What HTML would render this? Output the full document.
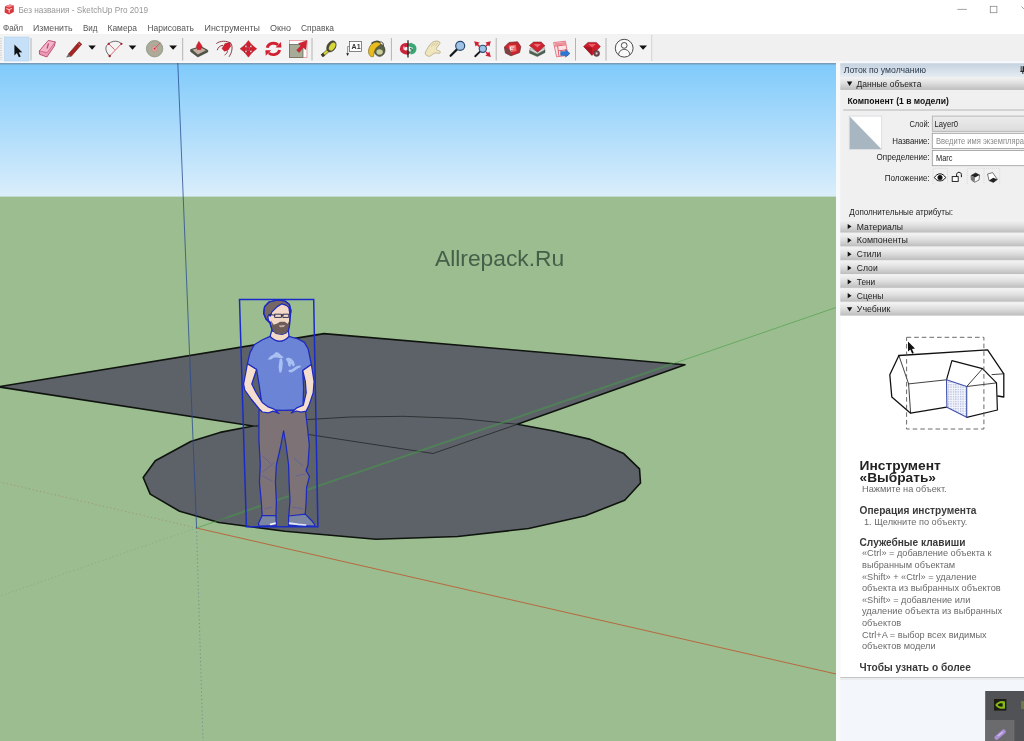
<!DOCTYPE html>
<html><head><meta charset="utf-8">
<style>
*{margin:0;padding:0;box-sizing:border-box}
html,body{width:1024px;height:741px;overflow:hidden;background:#fff}
body{position:relative;filter:blur(0.4px);font-family:"Liberation Sans",sans-serif;color:#333}
.t{position:absolute;white-space:nowrap;line-height:1;transform-origin:0 50%}
#titlebar{position:absolute;left:0;top:0;width:1024px;height:34px;background:#fff}
#toolbar{position:absolute;left:0;top:34px;width:1024px;height:29px;background:#f0f0f0}
#vp{position:absolute;left:0;top:63px;width:836px;height:678px;display:block}
#panel{position:absolute;left:836px;top:63px;width:188px;height:678px;background:#f0f0f0}
.row{position:absolute;left:5px;width:183px;height:12.3px;background:linear-gradient(#efefef,#dcdcdc 45%,#c2c2c2);}
.row .t{left:16px;top:1.5px;font-size:8.7px;color:#222}
.row i{position:absolute;left:6px;top:3.5px;width:0;height:0;border-style:solid}
.row i.r{border-width:2.6px 0 2.6px 4.2px;border-color:transparent transparent transparent #111}
.row i.d{border-width:4.2px 2.6px 0 2.6px;border-color:#111 transparent transparent transparent;left:5.5px;top:4px}
.lbl{position:absolute;font-size:8.1px;color:#222;white-space:nowrap;line-height:1;text-align:right;right:94px}
.inp{position:absolute;left:96px;width:96px;height:15.5px;border:1px solid #adadad;background:#fff;font-size:8px;line-height:13px;padding-left:2.5px;white-space:nowrap;overflow:hidden}
.tx{position:absolute;left:26px;font-size:9.2px;color:#666;white-space:nowrap;line-height:1}
.hd{position:absolute;left:23.5px;font-size:10.1px;font-weight:bold;color:#333;white-space:nowrap;line-height:1}
</style></head><body>
<!-- TITLEBAR -->
<div id="titlebar"></div>
<!-- TOOLBAR -->
<div id="toolbar"></div>
<svg id="topsvg" style="position:absolute;left:0;top:0" width="1024" height="63" viewBox="0 0 1024 63" font-family="Liberation Sans, sans-serif">
<!-- logo -->
<path d="M5,6.2 L10,4.4 L13.8,5.6 L13.8,12 L9,14.4 L4.6,12.6 Z" fill="#d9363c"/>
<path d="M5,6.2 L10,4.4 L13.8,5.6 L9.2,7.6 Z" fill="#f08a86"/>
<path d="M6.3,8.6 L9.2,9.6 L11.8,8.4 M9.2,9.6 L9.2,12.6" stroke="#fbe0dc" stroke-width="1" fill="none"/>
<text x="18.4" y="13.3" font-size="9.2" fill="#969696" textLength="129.7" lengthAdjust="spacingAndGlyphs">Без названия - SketchUp Pro 2019</text>
<!-- window buttons -->
<path d="M957.4,9.4 h9.4" stroke="#8a8a8a" stroke-width="0.8"/>
<rect x="990.3" y="6.3" width="6.6" height="6.4" fill="none" stroke="#8a8a8a" stroke-width="0.8"/>
<path d="M1021.5,6.5 l5,5" stroke="#8a8a8a" stroke-width="0.8"/>
<!-- menu -->
<g font-size="8.9" fill="#555">
<text x="3" y="30.8" textLength="20" lengthAdjust="spacingAndGlyphs">Файл</text>
<text x="33" y="30.8" textLength="39.5" lengthAdjust="spacingAndGlyphs">Изменить</text>
<text x="83" y="30.8" textLength="14.5" lengthAdjust="spacingAndGlyphs">Вид</text>
<text x="107.5" y="30.8" textLength="29.5" lengthAdjust="spacingAndGlyphs">Камера</text>
<text x="147.5" y="30.8" textLength="46.5" lengthAdjust="spacingAndGlyphs">Нарисовать</text>
<text x="204.5" y="30.8" textLength="55.5" lengthAdjust="spacingAndGlyphs">Инструменты</text>
<text x="270" y="30.8" textLength="21" lengthAdjust="spacingAndGlyphs">Окно</text>
<text x="301" y="30.8" textLength="33" lengthAdjust="spacingAndGlyphs">Справка</text>
</g>
<!-- toolbar bg -->
<rect x="0" y="34.4" width="1024" height="28.6" fill="#f0f0f0"/>
<rect x="0" y="34.4" width="652" height="27.6" fill="#f3f3f3"/>
<path d="M651.7,35 v26.5" stroke="#d2d2d2" stroke-width="1"/>
<rect x="0" y="61" width="1024" height="2.2" fill="#f6f8fb"/>
<rect x="0" y="63" width="836" height="0.4" fill="#7b97ab"/>
<!-- gripper -->
<path d="M1,38 v22" stroke="#c8c8c8" stroke-width="1.4" stroke-dasharray="1 1.4"/>
<!-- select -->
<rect x="4.5" y="37" width="24.5" height="24" fill="#c6e0f7" stroke="#b3d3ee" stroke-width="0.6"/>
<path d="M14.4,44.4 L14.4,55.4 L16.9,53 L18.9,57.3 L20.7,56.5 L18.8,52.4 L22.2,52.2 Z" fill="#111"/>
<!-- separators -->
<g stroke="#b4b4b4" stroke-width="1">
<path d="M31,38 v22.5"/><path d="M182.7,38 v22.5"/><path d="M312,38 v22.5"/><path d="M391.4,38 v22.5"/><path d="M496.2,38 v22.5"/><path d="M575.5,38 v22.5"/><path d="M606,38 v22.5"/>
</g>
<!-- eraser -->
<path d="M39.3,51 L48.2,40.6 L55.3,41.9 L54.4,46 L46.9,57 L39.6,54.3 Z" fill="#ef98b3" stroke="#a33c66" stroke-width="0.8" stroke-linejoin="round"/>
<path d="M39.3,51 L48.2,40.6 L55.3,41.9 L47.2,52.6 Z" fill="#f7b5c9" stroke="#a33c66" stroke-width="0.5" stroke-linejoin="round"/>
<path d="M48.5,43.5 L47,48.5" stroke="#b04a74" stroke-width="1.2"/>
<!-- pencil -->
<path d="M68.2,54.2 L79,41.8 L81.8,44.2 L71,56.6 Z" fill="#a82424" stroke="#6e1a1a" stroke-width="0.6"/>
<path d="M68.2,54.2 L71,56.6 L66,57.6 Z" fill="#6a6a6a"/>
<path d="M78.2,43.4 L80.2,45.1" stroke="#e07a7a" stroke-width="0.8"/>
<!-- dropdowns -->
<g fill="#111">
<path d="M88.4,45.4 h7.4 l-3.7,4.3 Z"/><path d="M128.7,45.4 h7.6 l-3.8,4.3 Z"/><path d="M169.2,45.4 h7.8 l-3.9,4.3 Z"/><path d="M639.2,45.5 h7.8 l-3.9,4.3 Z"/>
</g>
<!-- arc -->
<path d="M109.7,56 C104.5,51 105,45.5 108.7,43.8 C112.5,40.2 118.5,40.5 121.4,43.8" fill="none" stroke="#5a5a5a" stroke-width="0.9"/>
<path d="M109.7,56 L121.4,43.8 M108.7,43.8 L114.8,49.8" stroke="#d45a66" stroke-width="0.9" fill="none"/>
<g fill="#9a2030"><circle cx="109.7" cy="56" r="1.2"/><circle cx="108.7" cy="43.8" r="1.1"/><circle cx="121.4" cy="43.8" r="1.1"/></g>
<!-- circle tool -->
<circle cx="154.6" cy="48.7" r="8.2" fill="#a7ab98" stroke="#8d9180" stroke-width="0.8"/>
<circle cx="154.6" cy="48.7" r="5.3" fill="none" stroke="#c7a59c" stroke-width="0.9"/>
<circle cx="154.6" cy="48.7" r="2.8" fill="#d9a8a0" stroke="#c98a86" stroke-width="0.6"/>
<path d="M154.6,48.7 L160.5,42.6" stroke="#d0505c" stroke-width="0.9"/>
<circle cx="154.6" cy="48.7" r="0.9" fill="#d02a3a"/>
<!-- push/pull -->
<path d="M190.6,49.6 L200.6,46.3 L207.8,50.2 L207.8,52 L197.8,57 L190.6,51.6 Z" fill="#4e5646" stroke="#2c302a" stroke-width="0.5"/>
<path d="M192.4,49.8 L200.4,47.2 L206,50.2 L197.9,54.4 Z" fill="#c4ac9e"/>
<path d="M198.4,48 h1.6 v3.4 h-1.6 Z" fill="#eab0b0"/>
<path d="M198.9,41.3 L202.2,46.2 L200.6,49.8 L197.6,49.8 L196.2,46.2 Z" fill="#d42030" stroke="#9a1826" stroke-width="0.4"/>
<!-- follow me -->
<path d="M216.3,43.6 C220,40.6 227,40.4 231,43.4 C233,47 232,52.6 229,56.8 M217.3,50.2 C217.8,47.6 220,45.6 223,45.3 M224.6,55 C226.2,54.2 227.4,52.6 227.5,51.2" fill="none" stroke="#8a3a44" stroke-width="1"/>
<path d="M222,48.6 L225,43.6 L230,42.4 L230.6,46.2 L228,50.2 L224.4,51.2 Z" fill="#d42030" stroke="#8a1420" stroke-width="0.4"/>
<!-- move -->
<g fill="#d22030" stroke="#8a1420" stroke-width="0.3">
<path d="M248.4,40.4 L252.4,45.4 L250,45.4 L250,47.4 L246.8,47.4 L246.8,45.4 L244.4,45.4 Z"/>
<path d="M248.4,57.2 L252.4,52.2 L250,52.2 L250,50.2 L246.8,50.2 L246.8,52.2 L244.4,52.2 Z"/>
<path d="M240,48.8 L245,44.8 L245,47.2 L246.8,47.2 L246.8,50.4 L245,50.4 L245,52.8 Z"/>
<path d="M256.8,48.8 L251.8,44.8 L251.8,47.2 L250,47.2 L250,50.4 L251.8,50.4 L251.8,52.8 Z"/>
</g>
<rect x="247" y="47.4" width="2.8" height="2.8" fill="#d22030"/>
<!-- rotate -->
<g fill="none" stroke="#d22030" stroke-width="2.9">
<path d="M267.2,47.8 C268.2,43.2 274.5,41.8 278,44.8"/>
<path d="M279.6,50 C278.6,54.6 272.3,56 268.8,53"/>
</g>
<path d="M275.6,47.6 L281.4,47.6 L281,42 Z" fill="#d22030"/>
<path d="M271.2,50.2 L265.4,50.2 L265.8,55.8 Z" fill="#d22030"/>
<!-- scale -->
<rect x="289.6" y="40.6" width="17.4" height="16.8" fill="#fdfdfd" stroke="#e46a74" stroke-width="0.6"/>
<rect x="289.6" y="44.4" width="13.4" height="13" fill="#a7ab98" stroke="#5e6254" stroke-width="0.7"/>
<path d="M296.6,50.2 L300.8,45.8 L298.4,43.4 L307,40.6 L305.8,49.8 L303.4,47.6 L299.2,52.6 Z" fill="#d42030" stroke="#8a1420" stroke-width="0.3"/>
<!-- tape -->
<path d="M322,54 L328.6,48.4 L330.4,50.4 L323.6,56.4 Z" fill="#d8d43c" stroke="#4a4a28" stroke-width="0.6"/>
<rect x="321.4" y="53.4" width="3" height="3.2" transform="rotate(-40 322.9 55)" fill="#3a3a2a"/>
<ellipse cx="331.4" cy="46.4" rx="4.2" ry="6" transform="rotate(32 331.4 46.4)" fill="#4a4a36" stroke="#2c2c20" stroke-width="0.5"/>
<ellipse cx="332.2" cy="46.6" rx="2.7" ry="4.4" transform="rotate(32 332.2 46.6)" fill="#d6d83a"/>
<!-- text tool -->
<rect x="349.6" y="41.5" width="12" height="10" fill="#fff" stroke="#555" stroke-width="0.7"/>
<text x="351.6" y="49.4" font-size="7" font-weight="bold" fill="#333">A1</text>
<path d="M349.6,46.5 H347.6 V54" fill="none" stroke="#666" stroke-width="0.7"/>
<path d="M346.2,53.2 h2.8 l-1.4,2.8 Z" fill="#222"/>
<!-- paint bucket -->
<ellipse cx="379.6" cy="50.2" rx="5.4" ry="6.2" fill="#5a6046" stroke="#2f3326" stroke-width="0.6"/>
<ellipse cx="379.6" cy="52" rx="3.2" ry="2.8" fill="#c9cf9c"/>
<path d="M379,44 C379.5,40.5 384,41.5 383.4,46" fill="none" stroke="#4c4c4c" stroke-width="1"/>
<path d="M368.6,50 C369.5,45 373.5,41 378.5,41.5 C381,42 381.2,44.5 378.6,46 C375,48 373.8,52 373.6,56.4 C371,57.8 368,55 368.6,50 Z" fill="#e8bc1e" stroke="#6c5a10" stroke-width="0.6"/>
<path d="M371.5,43.6 C374,41 378,40.8 380,42.6" fill="none" stroke="#4a5038" stroke-width="1.6"/>
<!-- orbit -->
<path d="M408.6,45.2 C403.4,44.4 401.6,46.6 401.8,49.2 C402.2,52 405.4,52.8 408,52.4" fill="none" stroke="#c8243a" stroke-width="4"/>
<path d="M406.6,49.8 L411,52.6 L407,55.4 Z" fill="#c8243a"/>
<path d="M404.2,46.4 C403.4,47.4 403.6,48.6 404.6,49.2" fill="none" stroke="#f0c0c4" stroke-width="1.1"/>
<path d="M409.6,45 C413.4,44.8 414.8,47 414.6,49 C414.4,51.2 412.6,52.4 410.4,52.6" fill="none" stroke="#3aa874" stroke-width="3.8"/>
<path d="M411.4,42.4 L407.6,45 L411.4,47.8 Z" fill="#3aa874"/>
<path d="M410,48.6 C411.4,48.6 412.4,49.4 412.2,50.6" fill="none" stroke="#1f6a46" stroke-width="1.2"/>
<path d="M408,40.2 V57.4" stroke="#1c2a24" stroke-width="1.3"/>
<!-- pan -->
<path d="M425.2,53 C426.5,49.5 429,45.5 431.5,43 C433,41.6 435.5,40.8 438,41.2 C439.6,41.6 440.4,42.6 439.8,43.8 C439,45.4 437.2,46.6 436.4,48.2 C436,49.2 436.6,50 437.8,50.4 C439.4,50.8 440.6,51.4 440.4,52.6 C440,53.6 438,53.4 436.4,53 C434.6,52.8 433.4,53.6 432,54.8 C430.6,56 429.6,56.6 428.4,56.2 C426.6,55.6 425,54.6 425.2,53 Z" fill="#f0e6be" stroke="#aa9e7a" stroke-width="0.7"/>
<path d="M433.2,43.4 L431,46.8 M435.6,42.4 L433.4,46.2 M437.8,42.6 L435.8,46" stroke="#b8ac88" stroke-width="0.5" fill="none"/>
<!-- zoom -->
<path d="M457,49.4 L450.6,55.8" stroke="#15191d" stroke-width="2.2" stroke-linecap="round"/>
<circle cx="460.2" cy="45.8" r="4.5" fill="#9fc3e6" stroke="#2a4a6c" stroke-width="1.2"/>
<!-- zoom extents -->
<g fill="#cc2234">
<path d="M474.2,41.2 L479.6,42.4 L475.6,46.6 Z"/><path d="M490.8,41.2 L485.4,42.4 L489.4,46.6 Z"/><path d="M490.8,57 L485.4,55.8 L489.4,51.6 Z"/>
<path d="M476.4,43.6 L479.4,46.4 M488.6,43.6 L486,46 M488.6,54.6 L486,52.2" stroke="#cc2234" stroke-width="1.6"/>
</g>
<path d="M480,51.6 L475.2,56.2" stroke="#15191d" stroke-width="1.9" stroke-linecap="round"/>
<circle cx="482.8" cy="48.8" r="3.6" fill="#9fc3e6" stroke="#2a4a6c" stroke-width="1.1"/>
<!-- 3d warehouse -->
<path d="M504.4,47 L509,42.4 L517.6,41.8 L520.8,46.6 L519.6,52.6 L511,55.8 L505.4,53 Z" fill="#c8242e" stroke="#6a2a2c" stroke-width="0.7"/>
<path d="M508.6,45.6 L515.8,44.8 L516.6,51 L509.6,52.4 Z" fill="#ee6a6a"/>
<path d="M510.4,47 h4 M510.4,49.2 h2.8 M510.4,47 v4" stroke="#fff" stroke-width="0.9" fill="none"/>
<path d="M504.4,47 L505.4,53 L511,55.8 L510.4,50 Z" fill="#7a4444"/>
<!-- ext warehouse -->
<path d="M529.6,50.2 L537.4,53.6 L545,49.6 L545,52.6 L537.4,56.6 L529.6,53.2 Z" fill="#49624e" stroke="#2c3a30" stroke-width="0.4"/>
<path d="M530,48 L537.2,51.6 L544.6,47.6 L544.6,50 L537.2,54 L530,50.4 Z" fill="#d8d8d8" stroke="#777" stroke-width="0.4"/>
<path d="M529.4,45.6 L533.6,42 L541.2,42 L545,45.8 L537.6,52.2 Z" fill="#cc2430" stroke="#7a1a22" stroke-width="0.5"/>
<path d="M533.6,44 L541,44 L537.4,47.4 Z" fill="#ee6a70"/>
<!-- layout -->
<path d="M553.6,42.6 L565.4,41.2 L568,55.4 L556.6,56.8 Z" fill="#fbe4e6" stroke="#e0606e" stroke-width="0.8"/>
<path d="M554.4,46.2 L566,44.8 M557.6,46 L559,56.4 M558.4,50.8 L567,49.8" stroke="#e0606e" stroke-width="1" fill="none"/>
<path d="M554.6,43.2 L565,42 L565.4,44.6 L555,45.8 Z" fill="#ee8e98"/>
<path d="M560.6,51.4 L565.6,51.4 L565.6,49.6 L570,53.4 L565.6,57.2 L565.6,55.4 L560.6,55.4 Z" fill="#2c78d4" stroke="#1a4a8c" stroke-width="0.4"/>
<!-- ruby -->
<path d="M583.6,46.4 L588,42.4 L596.4,42.4 L600.4,46.6 L592,55.4 Z" fill="#cc1e2c" stroke="#7a1420" stroke-width="0.5"/>
<path d="M588,44 L596,44 L592.2,47.6 Z" fill="#ee5a66"/>
<path d="M583.6,46.4 L592,55.4 L592.2,47.6 Z" fill="#a81824"/>
<circle cx="596.6" cy="53.4" r="3" fill="#6a4a50" stroke="#4a3036" stroke-width="0.5"/>
<circle cx="596.6" cy="53.4" r="1.1" fill="#e8c8cc"/>
<!-- user -->
<circle cx="624.2" cy="48.2" r="8.9" fill="#fafafa" stroke="#3a3a3a" stroke-width="0.9"/>
<circle cx="624.2" cy="45.4" r="2.9" fill="none" stroke="#3a3a3a" stroke-width="0.9"/>
<path d="M618.6,54.8 C619,50.6 622,49.4 624.2,49.4 C626.4,49.4 629.4,50.6 629.8,54.8" fill="none" stroke="#3a3a3a" stroke-width="0.9"/>
</svg>
<!-- VIEWPORT -->
<svg id="vp" viewBox="0 63 836 678">
<defs>
<linearGradient id="sky" x1="0" y1="0" x2="0" y2="1">
<stop offset="0" stop-color="#7fcafb"/><stop offset="1" stop-color="#dbeefb"/>
</linearGradient>
</defs>
<rect x="0" y="63" width="836" height="134" fill="url(#sky)"/>
<rect x="0" y="196.6" width="836" height="545" fill="#9bbd8f"/>
<rect x="0" y="63" width="836" height="1.5" fill="#7a9cb6"/>
<!--SCENE-->
<!-- shapes -->
<g stroke="#10140f" stroke-width="1.6" stroke-linejoin="round" fill="#5d6268">
<path d="M-2,386.8 L324,333.6 L685,364.7 L517.4,424.3 L554,431 L589.3,439.1 L623.7,453.6 L639.5,468.8 L640.5,483 L624.7,500.2 L585.3,515.8 L528.6,528.5 L457.8,536.5 L375.8,539.2 L285,531.3 L219,522.5 L179.6,511.3 L150.2,494.1 L143.2,477.5 L155.3,460.7 L190.7,441.5 L220,432.4 L253,426 Z"/>
</g>
<g stroke="#1a1d20" stroke-width="0.7" fill="none">
<path d="M253,426 L433,453.5 L517.4,424.3"/>
<path d="M253,426 L300,420 L350,417 L404,416.3 L460,418.5 L517.4,424.3"/>
</g>
<!-- axes -->
<line x1="226" y1="517.8" x2="672" y2="364" stroke="#4f9a58" stroke-width="2.4" opacity=".3"/>
<line x1="196.5" y1="528" x2="836" y2="307.5" stroke="#3f9a3f" stroke-width="0.9" opacity=".62"/>
<line x1="196.5" y1="528" x2="836" y2="674" stroke="#bc5a30" stroke-width="1" opacity=".85"/>
<line x1="196.5" y1="528" x2="0" y2="482" stroke="#a86a48" stroke-width="0.9" stroke-dasharray="1.2 2.6" opacity=".5"/>
<line x1="196.5" y1="528" x2="0" y2="596" stroke="#6a9a66" stroke-width="0.9" stroke-dasharray="1.2 2.6" opacity=".45"/>
<line x1="177.8" y1="63" x2="196.6" y2="528" stroke="#27488f" stroke-width="0.9" opacity=".85"/>
<line x1="196.5" y1="528" x2="203" y2="741" stroke="#50609a" stroke-width="0.9" stroke-dasharray="1.2 2.6" opacity=".55"/>
<!-- person -->
<g id="person" stroke="#1c2abf" stroke-width="1.25" stroke-linejoin="round" stroke-linecap="round">
<!-- pants -->
<path d="M259,410 L305.4,410 L307.5,428 L309.3,445 L308,465 L306.1,470.7 L309.4,476.3 L306.6,487.7 L306.1,502.8 L305.2,514.1 L305,518 L288.6,518 L290,501 L289.1,483 L288.6,465 L286,445 L283.6,430.9 L280.5,447 L276.4,465 L275.4,482 L276.4,501 L275.9,517 L262.2,517 L261.2,500.9 L259.4,482 L260.3,465 L258.9,440 Z" fill="#7d7376"/>
<path d="M263,456 L271,464 M262.5,472 L274,463 M263,476 L272,481 M294,458 L303,466 M296,476 L305,474 M265,509 L272,507 M293,507 L303,509" stroke="#4550c0" stroke-width="0.6" fill="none" opacity=".8"/>
<!-- shoes -->
<path d="M262.2,515.5 L275.9,515.5 L276.4,525.6 L259,526 L258.4,523.4 Z" fill="#7d86a0"/>
<path d="M288.6,516 L305.2,514.1 L311.8,520.7 L314.6,524.5 L314.6,526 L288.6,525.4 Z" fill="#7d86a0"/>
<path d="M270.6,524.4 L275,523.2" stroke="#f4f6ff" stroke-width="1.7"/>
<path d="M289.6,523.2 L298,524.4 L305.6,525" stroke="#dfe6ff" stroke-width="1.7" fill="none"/>
<!-- shirt -->
<path d="M270.1,336.4 Q279.8,346 289,336.4 L298,339 L304.4,342.4 L308.2,349 L311.4,364.6 L302.7,370.4 L303.6,388 L303.1,402.4 L303.4,409.6 L283,410.4 L261.2,409.6 L261.4,400.6 L259,384 L256.6,369.5 L247.4,363.8 L250,352.6 L254.3,344.8 L262,340 Z" fill="#6c84d6"/>
<!-- lakes -->
<path d="M267.6,359.4 L270.4,356.2 L273.6,354.6 L276,352 L278.6,352.8 L281.4,355.4 L283.8,357.2 L281,358.6 L277.6,357.4 L274,357.6 L271,359.6 Z M279.6,359.2 L282,358.6 L282.8,363 L282.2,369 L281.2,372.6 L279.4,372.4 L278.6,367 Z M285.6,359 L288,357.6 L291,358.4 L293.6,361 L295,365 L293,366.4 L291,363.6 L290.4,367 L288.4,366 L287.6,362 Z M288.6,370 L291.6,369.4 L294.6,367.6 L297,366 L300.6,365.6 L300.8,367 L297.6,368.4 L295,370.6 L291.6,372.4 L288.8,372 Z" fill="#a9c0f3" stroke="none"/>
<!-- arms -->
<path d="M247.4,363.8 L243.6,384 L244.8,390 L251.5,399.5 L258.8,408.5 L262.3,412 L268.5,412.9 L273,411.2 L279,413.5 L273.5,408.8 L267.6,406.6 L262.3,402.4 L256,392.5 L251.8,384 L256.6,369.5 Z" fill="#f6dece"/>
<path d="M311.4,364.6 L314.1,381.3 L313.2,392.7 L308.8,405.9 L306.2,411.1 L300.9,412.2 L296.6,411 L291.3,413 L296.8,407.8 L303.3,405.2 L306.2,392.7 L305.3,381.3 L302.7,370.4 Z" fill="#f6dece"/>
<!-- neck -->
<path d="M271.6,331 L270.1,336.4 Q279.8,346 289,336.4 L288.4,331 Z" fill="#f3d9c6"/>
<!-- head skin -->
<path d="M267.2,315.5 L267.6,320.5 L270.2,322 L272,329.5 L276,333.4 L282,334.4 L286.6,332.6 L289.4,326 L290,315.2 L289.6,308 L286,303.6 L280,302.4 L273,305.6 Z" fill="#f3d9c6"/>
<!-- hair -->
<path d="M269.6,322.6 L266,319 L263.6,313.2 L264.6,306.6 L269,302 L277.3,300 L285,301 L289.4,304.6 L290.9,310.5 L290.2,315.6 L288.9,307.6 L286.4,305.4 L282,303.8 L277.6,306.4 L271.9,311.9 L270.4,316 L269.6,315.2 L267.8,316.2 L268.4,320.4 Z" fill="#756864"/>
<!-- beard -->
<path d="M271,320.4 L273.6,324.8 L277.2,323.4 L280,321.8 L284.8,321.8 L287.6,323.8 L289.5,320.4 L289.4,326 L286.8,332.6 L282,334.6 L275.8,333.4 L272,329.4 Z" fill="#6c5d5b" stroke="none"/>
<path d="M278.6,325.4 L285.2,325 L283.8,327 L280,327.2 Z" fill="#c9a89a" stroke="none"/>
<!-- head outline -->
<path d="M271.6,331.4 L272,329.5 L269.6,322.6 L266,319 L263.6,313.2 L264.6,306.6 L269,302 L277.3,300 L285,301 L289.4,304.6 L290.9,310.5 L290.2,318 L289.4,326 L288.4,331.4" fill="none"/>
<!-- glasses -->
<path d="M268.8,314.4 L275,315.2 M275,314.2 h6.4 v3.2 h-6.4 Z M283.2,314.2 h5.6 v3.2 h-5.6 Z M281.4,315.2 h1.8" stroke="#23234e" stroke-width="0.9" fill="none"/>
</g>
<!-- bbox -->
<path d="M239.5,299.5 L313.7,299.5 L317.9,526.8 L246.4,526.8 Z" fill="none" stroke="#1a2cc8" stroke-width="1.5"/>
<!-- watermark -->
<text x="435" y="266" font-family="Liberation Sans, sans-serif" font-size="22.8" fill="#456049">Allrepack.Ru</text>
<!--/SCENE-->
</svg>
<!-- PANEL -->
<div id="panel"></div>
<svg id="panelsvg" style="position:absolute;left:836px;top:63px" width="188" height="678" viewBox="836 63 188 678" font-family="Liberation Sans, sans-serif">
<defs>
<linearGradient id="hdr" x1="0" y1="0" x2="0" y2="1"><stop offset="0" stop-color="#c4d2e0"/><stop offset="1" stop-color="#e6ecf2"/></linearGradient>
<linearGradient id="rowg" x1="0" y1="0" x2="0" y2="1"><stop offset="0" stop-color="#f2f2f2"/><stop offset=".45" stop-color="#dedede"/><stop offset="1" stop-color="#bdbdbd"/></linearGradient>
<linearGradient id="ddg" x1="0" y1="0" x2="0" y2="1"><stop offset="0" stop-color="#ececec"/><stop offset="1" stop-color="#dddddd"/></linearGradient>
<pattern id="dots" width="2.4" height="2.4" patternUnits="userSpaceOnUse"><rect width="2.4" height="2.4" fill="#f4f6fc"/><circle cx="0.7" cy="0.7" r="0.45" fill="#5a6ab8"/></pattern>
</defs>
<rect x="836" y="63" width="188" height="678" fill="#f0f0f0"/>
<rect x="836" y="63" width="4.3" height="678" fill="#f7f9fa"/>
<rect x="840.3" y="63.3" width="184" height="13.8" fill="url(#hdr)"/>
<text x="843.7" y="73.3" font-size="8.8" fill="#2a3a4c" textLength="82.3" lengthAdjust="spacingAndGlyphs">Лоток по умолчанию</text>
<path d="M1021.2,66.2 v5.2 h3 M1020.2,71.4 h4 M1022.8,71.4 v2.6" stroke="#222" stroke-width="0.9" fill="none"/><rect x="1022.6" y="66.2" width="1.6" height="5" fill="#222"/>
<rect x="840.3" y="77.7" width="184" height="12.2" fill="url(#rowg)"/>
<path d="M846.9,81.6 h5.4 l-2.7,4.3 Z" fill="#111"/>
<text x="856.6" y="86.7" font-size="8.8" fill="#222" textLength="64.8" lengthAdjust="spacingAndGlyphs">Данные объекта</text>
<text x="847.4" y="103.7" font-size="8.8" font-weight="bold" fill="#111" textLength="101.5" lengthAdjust="spacingAndGlyphs">Компонент (1 в модели)</text>
<path d="M843.3,110 H1024" stroke="#a6a6a6" stroke-width="0.8"/>
<!-- thumb -->
<rect x="849.3" y="116.1" width="32.4" height="33.4" fill="#fff" stroke="#d4d8dc" stroke-width="0.8"/>
<path d="M849.7,116.5 L849.7,149.1 L881.3,149.1 Z" fill="#a8b6c2"/>
<!-- fields -->
<g font-size="8.2" fill="#222">
<text x="909.4" y="126.6" textLength="20.3" lengthAdjust="spacingAndGlyphs">Слой:</text>
<text x="892.2" y="143.5" textLength="37.5" lengthAdjust="spacingAndGlyphs">Название:</text>
<text x="876.6" y="160.3" textLength="53.1" lengthAdjust="spacingAndGlyphs">Определение:</text>
<text x="884.7" y="180.8" textLength="45" lengthAdjust="spacingAndGlyphs">Положение:</text>
</g>
<rect x="932.3" y="116.1" width="95" height="15.2" fill="url(#ddg)" stroke="#acacac" stroke-width="0.8"/>
<text x="934.6" y="126.7" font-size="8.2" fill="#222" textLength="23.4" lengthAdjust="spacingAndGlyphs">Layer0</text>
<rect x="932.3" y="133.3" width="95" height="15.2" fill="#fff" stroke="#9a9a9a" stroke-width="0.8"/>
<text x="936" y="143.5" font-size="8.2" fill="#8a8a8a" textLength="88" lengthAdjust="spacingAndGlyphs">Введите имя экземпляра</text>
<rect x="932.3" y="150.5" width="95" height="15.2" fill="#fff" stroke="#9a9a9a" stroke-width="0.8"/>
<text x="936" y="160.6" font-size="8.2" fill="#222" textLength="16.5" lengthAdjust="spacingAndGlyphs">Marc</text>
<!-- toggles -->
<g fill="none" stroke="#d0d0d0" stroke-width="0.7" stroke-dasharray="1 1">
<path d="M933,184 V168.3 H947.5 V184"/><path d="M967.3,184 V168.3 H984 V184"/><path d="M984,168.3 H999.7 V184"/>
</g>
<path d="M934.4,177.6 C937,172.6 943,172.6 945.6,177.6 C943,182 937,182 934.4,177.6 Z" fill="#fff" stroke="#111" stroke-width="1"/>
<circle cx="940" cy="177.4" r="2.5" fill="#111"/>
<rect x="952.2" y="176.6" width="6" height="4.8" fill="#fff" stroke="#111" stroke-width="0.9"/>
<path d="M956.6,176.6 v-2 c0,-3 4.8,-3 4.8,0 v2.6" fill="none" stroke="#111" stroke-width="1"/>
<path d="M971,175.6 L975.6,173 L979.6,175 L979,180 L974.6,182.2 L971.4,180 Z" fill="#fff" stroke="#222" stroke-width="0.6"/>
<path d="M971,175.6 L975.6,173 L979.6,175 L975,177.4 Z" fill="#222"/>
<path d="M971,175.6 L975,177.4 L974.6,182.2 L971.4,180 Z" fill="#777"/>
<path d="M987.6,174 L992.6,172.6 L997.4,179.4 L993.4,182.4 L989,180.6 Z" fill="#fff" stroke="#222" stroke-width="0.6"/>
<path d="M989,180.6 L993.4,182.4 L997.4,179.4 L993.2,177.8 Z" fill="#222"/>
<text x="849.3" y="215.4" font-size="8.2" fill="#222" textLength="103.8" lengthAdjust="spacingAndGlyphs">Дополнительные атрибуты:</text>

<rect x="840.3" y="220.30" width="184" height="12.2" fill="url(#rowg)"/>
<path d="M847.7,223.90 v5.2 l3.8,-2.6 Z" fill="#111"/>
<text x="856.8" y="229.50" font-size="8.8" fill="#222" textLength="46.2" lengthAdjust="spacingAndGlyphs">Материалы</text>
<rect x="840.3" y="234.13" width="184" height="12.2" fill="url(#rowg)"/>
<path d="M847.7,237.73 v5.2 l3.8,-2.6 Z" fill="#111"/>
<text x="856.8" y="243.33" font-size="8.8" fill="#222" textLength="51.2" lengthAdjust="spacingAndGlyphs">Компоненты</text>
<rect x="840.3" y="247.96" width="184" height="12.2" fill="url(#rowg)"/>
<path d="M847.7,251.56 v5.2 l3.8,-2.6 Z" fill="#111"/>
<text x="856.8" y="257.16" font-size="8.8" fill="#222" textLength="24.5" lengthAdjust="spacingAndGlyphs">Стили</text>
<rect x="840.3" y="261.79" width="184" height="12.2" fill="url(#rowg)"/>
<path d="M847.7,265.39 v5.2 l3.8,-2.6 Z" fill="#111"/>
<text x="856.8" y="270.99" font-size="8.8" fill="#222" textLength="20.9" lengthAdjust="spacingAndGlyphs">Слои</text>
<rect x="840.3" y="275.62" width="184" height="12.2" fill="url(#rowg)"/>
<path d="M847.7,279.22 v5.2 l3.8,-2.6 Z" fill="#111"/>
<text x="856.8" y="284.82" font-size="8.8" fill="#222" textLength="18.4" lengthAdjust="spacingAndGlyphs">Тени</text>
<rect x="840.3" y="289.45" width="184" height="12.2" fill="url(#rowg)"/>
<path d="M847.7,293.05 v5.2 l3.8,-2.6 Z" fill="#111"/>
<text x="856.8" y="298.65" font-size="8.8" fill="#222" textLength="26.5" lengthAdjust="spacingAndGlyphs">Сцены</text>
<rect x="840.3" y="303.28" width="184" height="12.2" fill="url(#rowg)"/>
<path d="M846.9,307.28 h5.4 l-2.7,4.3 Z" fill="#111"/>
<text x="856.8" y="312.48" font-size="8.8" fill="#222" textLength="33.6" lengthAdjust="spacingAndGlyphs">Учебник</text>
<!-- tutor -->
<rect x="840.3" y="316" width="184" height="661" fill="#fff"/>
<rect x="840.3" y="677.4" width="184" height="64" fill="#f3f6fa"/>
<path d="M840.3,677.6 H1024" stroke="#b8b8b8" stroke-width="0.9"/>
<path d="M840.3,679.2 H1024" stroke="#e2e2e2" stroke-width="0.8"/>
<!-- house -->
<g fill="none" stroke="#111" stroke-width="1.1" stroke-linejoin="round" stroke-linecap="round">
<path d="M898.9,355.5 L987.6,349.9 L1003.8,373.8 L1003.8,397 L997.7,396" stroke-width="1.3"/>
<path d="M898.9,355.5 L889.8,374.8 L891.8,397 L910.6,413.2 L946.7,407.2" stroke-width="1.3"/>
<path d="M898.9,355.5 L908.6,383.9 L910.6,413.2" stroke-width="0.8"/>
<path d="M908.6,383.9 L946.5,379.8" stroke-width="0.8"/>
<path d="M992,374.6 L1003.8,373.8" stroke-width="0.8"/>
<path d="M946.5,379.8 L951.9,360.6 L982.5,368.7 L996.5,382.9 L997.4,410 L966.7,417.3" stroke-width="1.2"/>
<path d="M982.5,368.7 L966.7,386.5 L996.5,382.9" stroke-width="0.8"/>
</g>
<path d="M946.5,379.8 L966.7,386.5 L966.7,417.3 L946.9,407.2 Z" fill="url(#dots)" stroke="#3e50a8" stroke-width="1.1" stroke-linejoin="round"/>
<rect x="906.6" y="337.3" width="77.3" height="91.7" fill="none" stroke="#5a5a5a" stroke-width="0.9" stroke-dasharray="4.6 3"/>
<path d="M908,341.6 L908,351.6 L910.3,349.6 L912.2,353.8 L913.8,353 L912,349 L915,348.6 Z" fill="#111"/>
<!-- text -->
<g font-weight="bold" fill="#222">
<text x="859.5" y="469.8" font-size="13.4" textLength="81.3" lengthAdjust="spacingAndGlyphs">Инструмент</text>
<text x="859.5" y="481.8" font-size="13.4" textLength="76.5" lengthAdjust="spacingAndGlyphs">«Выбрать»</text>
</g>
<g font-weight="bold" fill="#3a3a3a" font-size="10.1">
<text x="859.5" y="513.8" textLength="117" lengthAdjust="spacingAndGlyphs">Операция инструмента</text>
<text x="859.5" y="545.6" textLength="105.9" lengthAdjust="spacingAndGlyphs">Служебные клавиши</text>
<text x="859.5" y="670.8" textLength="111.3" lengthAdjust="spacingAndGlyphs">Чтобы узнать о более</text>
</g>
<g fill="#6a6a6a" font-size="9.2">
<text x="862" y="491.6">Нажмите на объект.</text>
<text x="864" y="525.2">1. Щелкните по объекту.</text>
<text x="862" y="556.4">«Ctrl» = добавление объекта к</text>
<text x="862" y="568.1">выбранным объектам</text>
<text x="862" y="579.7">«Shift» + «Ctrl» = удаление</text>
<text x="862" y="591.3">объекта из выбранных объектов</text>
<text x="862" y="602.8">«Shift» = добавление или</text>
<text x="862" y="614.4">удаление объекта из выбранных</text>
<text x="862" y="626">объектов</text>
<text x="862" y="637.5">Ctrl+A = выбор всех видимых</text>
<text x="862" y="649.1">объектов модели</text>
</g>
<!-- tray popup -->
<rect x="985.2" y="691" width="40" height="52" fill="#515256"/>
<rect x="985.6" y="720.6" width="28.4" height="21" fill="#6b6b6d" stroke="#77777a" stroke-width="0.6"/>
<rect x="994" y="699" width="12.4" height="11.6" fill="#1c1c14"/>
<path d="M995.2,705 C997.6,701 1002,700.4 1005,701.6 L1005,708.6 C1001,709.4 997.6,708.4 995.2,705 Z" fill="#86b818"/>
<path d="M997.6,705 C999,703.4 1001,703 1002.6,703.6 L1002.6,706.6 C1000.6,707 999,706.4 997.6,705 Z" fill="#1c1c14"/>
<path d="M996.6,737.6 L1003.6,731.6" stroke="#ab8fd6" stroke-width="4.4" stroke-linecap="round"/>
<path d="M998.4,735.6 L1002.4,732.4" stroke="#d8c8f0" stroke-width="1.2" stroke-linecap="round"/>
<path d="M1022.6,701 v8" stroke="#70764e" stroke-width="3"/>
</svg>
</body></html>
